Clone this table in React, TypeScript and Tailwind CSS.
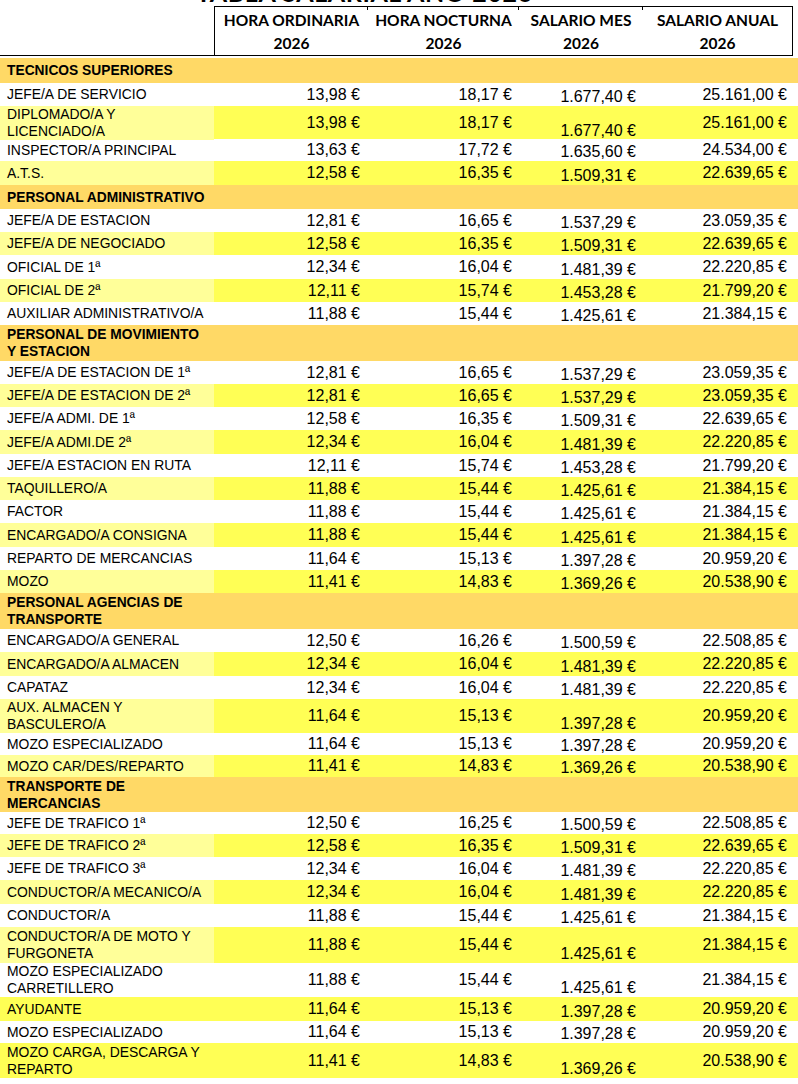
type Row =
  | { kind: "section"; label: string; h: string }
  | {
      kind: "data";
      label: string;
      v: [string, string, string, string];
      fill: "white" | "yellow" | "full";
      h: string;
    };

const rows: Row[] = [
  { kind: "section", label: "TECNICOS SUPERIORES", h: "h-[25px]" },
  { kind: "data", label: "JEFE/A DE SERVICIO", v: ["13,98", "18,17", "1.677,40", "25.161,00"], fill: "white", h: "h-[23px]" },
  { kind: "data", label: "DIPLOMADO/A Y\nLICENCIADO/A", v: ["13,98", "18,17", "1.677,40", "25.161,00"], fill: "yellow", h: "h-[33px]" },
  { kind: "data", label: "INSPECTOR/A PRINCIPAL", v: ["13,63", "17,72", "1.635,60", "24.534,00"], fill: "white", h: "h-[22px]" },
  { kind: "data", label: "A.T.S.", v: ["12,58", "16,35", "1.509,31", "22.639,65"], fill: "yellow", h: "h-[24px]" },
  { kind: "section", label: "PERSONAL ADMINISTRATIVO", h: "h-[24px]" },
  { kind: "data", label: "JEFE/A DE ESTACION", v: ["12,81", "16,65", "1.537,29", "23.059,35"], fill: "white", h: "h-[23px]" },
  { kind: "data", label: "JEFE/A DE NEGOCIADO", v: ["12,58", "16,35", "1.509,31", "22.639,65"], fill: "yellow", h: "h-[23px]" },
  { kind: "data", label: "OFICIAL DE 1ª", v: ["12,34", "16,04", "1.481,39", "22.220,85"], fill: "white", h: "h-[24px]" },
  { kind: "data", label: "OFICIAL DE 2ª", v: ["12,11", "15,74", "1.453,28", "21.799,20"], fill: "yellow", h: "h-[23px]" },
  { kind: "data", label: "AUXILIAR ADMINISTRATIVO/A", v: ["11,88", "15,44", "1.425,61", "21.384,15"], fill: "white", h: "h-[23px]" },
  { kind: "section", label: "PERSONAL DE MOVIMIENTO\nY ESTACION", h: "h-[36px]" },
  { kind: "data", label: "JEFE/A DE ESTACION DE 1ª", v: ["12,81", "16,65", "1.537,29", "23.059,35"], fill: "white", h: "h-[23px]" },
  { kind: "data", label: "JEFE/A DE ESTACION DE 2ª", v: ["12,81", "16,65", "1.537,29", "23.059,35"], fill: "yellow", h: "h-[23px]" },
  { kind: "data", label: "JEFE/A ADMI. DE 1ª", v: ["12,58", "16,35", "1.509,31", "22.639,65"], fill: "white", h: "h-[23px]" },
  { kind: "data", label: "JEFE/A ADMI.DE 2ª", v: ["12,34", "16,04", "1.481,39", "22.220,85"], fill: "yellow", h: "h-[24px]" },
  { kind: "data", label: "JEFE/A ESTACION EN RUTA", v: ["12,11", "15,74", "1.453,28", "21.799,20"], fill: "white", h: "h-[23px]" },
  { kind: "data", label: "TAQUILLERO/A", v: ["11,88", "15,44", "1.425,61", "21.384,15"], fill: "yellow", h: "h-[23px]" },
  { kind: "data", label: "FACTOR", v: ["11,88", "15,44", "1.425,61", "21.384,15"], fill: "white", h: "h-[23px]" },
  { kind: "data", label: "ENCARGADO/A CONSIGNA", v: ["11,88", "15,44", "1.425,61", "21.384,15"], fill: "yellow", h: "h-[24px]" },
  { kind: "data", label: "REPARTO DE MERCANCIAS", v: ["11,64", "15,13", "1.397,28", "20.959,20"], fill: "white", h: "h-[23px]" },
  { kind: "data", label: "MOZO", v: ["11,41", "14,83", "1.369,26", "20.538,90"], fill: "yellow", h: "h-[23px]" },
  { kind: "section", label: "PERSONAL AGENCIAS DE\nTRANSPORTE", h: "h-[36px]" },
  { kind: "data", label: "ENCARGADO/A GENERAL", v: ["12,50", "16,26", "1.500,59", "22.508,85"], fill: "white", h: "h-[23px]" },
  { kind: "data", label: "ENCARGADO/A ALMACEN", v: ["12,34", "16,04", "1.481,39", "22.220,85"], fill: "yellow", h: "h-[24px]" },
  { kind: "data", label: "CAPATAZ", v: ["12,34", "16,04", "1.481,39", "22.220,85"], fill: "white", h: "h-[23px]" },
  { kind: "data", label: "AUX. ALMACEN Y\nBASCULERO/A", v: ["11,64", "15,13", "1.397,28", "20.959,20"], fill: "yellow", h: "h-[34px]" },
  { kind: "data", label: "MOZO ESPECIALIZADO", v: ["11,64", "15,13", "1.397,28", "20.959,20"], fill: "white", h: "h-[22px]" },
  { kind: "data", label: "MOZO CAR/DES/REPARTO", v: ["11,41", "14,83", "1.369,26", "20.538,90"], fill: "yellow", h: "h-[22px]" },
  { kind: "section", label: "TRANSPORTE DE\nMERCANCIAS", h: "h-[35px]" },
  { kind: "data", label: "JEFE DE TRAFICO 1ª", v: ["12,50", "16,25", "1.500,59", "22.508,85"], fill: "white", h: "h-[22px]" },
  { kind: "data", label: "JEFE DE TRAFICO 2ª", v: ["12,58", "16,35", "1.509,31", "22.639,65"], fill: "yellow", h: "h-[23px]" },
  { kind: "data", label: "JEFE DE TRAFICO 3ª", v: ["12,34", "16,04", "1.481,39", "22.220,85"], fill: "white", h: "h-[23px]" },
  { kind: "data", label: "CONDUCTOR/A MECANICO/A", v: ["12,34", "16,04", "1.481,39", "22.220,85"], fill: "yellow", h: "h-[24px]" },
  { kind: "data", label: "CONDUCTOR/A", v: ["11,88", "15,44", "1.425,61", "21.384,15"], fill: "white", h: "h-[23px]" },
  { kind: "data", label: "CONDUCTOR/A DE MOTO Y\nFURGONETA", v: ["11,88", "15,44", "1.425,61", "21.384,15"], fill: "yellow", h: "h-[36px]" },
  { kind: "data", label: "MOZO ESPECIALIZADO\nCARRETILLERO", v: ["11,88", "15,44", "1.425,61", "21.384,15"], fill: "white", h: "h-[34px]" },
  { kind: "data", label: "AYUDANTE", v: ["11,64", "15,13", "1.397,28", "20.959,20"], fill: "full", h: "h-[24px]" },
  { kind: "data", label: "MOZO ESPECIALIZADO", v: ["11,64", "15,13", "1.397,28", "20.959,20"], fill: "white", h: "h-[22px]" },
  { kind: "data", label: "MOZO CARGA, DESCARGA Y\nREPARTO", v: ["11,41", "14,83", "1.369,26", "20.538,90"], fill: "full", h: "h-[35px]" },
];

const cols = "grid grid-cols-[214px_153px_151px_124px_150px_6px]";

const HeaderCell = ({ title, tick }: { title: string; tick?: boolean }) => (
  <div className="relative flex flex-col items-center pt-[2px] leading-[23px]">
    {tick && <div className="absolute left-[-1px] top-0 h-[3px] w-px bg-black" />}
    <span>{title}</span>
    <span>2026</span>
  </div>
);

export default function App() {
  return (
    <div className="flex h-[1084px] w-[798px] flex-col overflow-hidden bg-white text-black">
      {/* title, mostly scrolled off the top */}
      <div className="h-[6px] shrink-0 overflow-hidden">
        <div className="-mt-[20.5px] pl-[196px] font-['Lato',sans-serif] text-[25px] font-bold leading-[24px] tracking-[0.6px]">
          TABLA SALARIAL AÑO 2026
        </div>
      </div>

      {/* column headings */}
      <div className="flex w-[793px] shrink-0 border-b border-black">
        <div className="w-[214px]" />
        <div className="grid h-[49px] flex-1 grid-cols-[153px_151px_124px_1fr] border-l border-r border-t border-black font-['Lato',sans-serif] text-[15.5px] font-bold">
          <HeaderCell title="HORA ORDINARIA" />
          <HeaderCell title="HORA NOCTURNA" tick />
          <HeaderCell title="SALARIO MES" tick />
          <HeaderCell title="SALARIO ANUAL" tick />
        </div>
      </div>
      <div className="h-[2px] shrink-0" />

      <div className="font-['Liberation_Sans',Arial,sans-serif]">
        {rows.map((r, i) =>
          r.kind === "section" ? (
            <div key={i} className={`flex items-center bg-[#ffd966] pl-[7px] text-[13.8px] font-bold leading-[17px] whitespace-pre-line ${r.h}`}>
              {r.label}
            </div>
          ) : (
            <div
              key={i}
              className={`${cols} ${r.h} ${r.fill === "white" ? "bg-white" : "bg-[#ffff55]"}`}
            >
              <div
                className={`flex items-center pl-[7px] text-[13.9px] leading-[17px] whitespace-pre-line ${
                  r.fill === "yellow" ? "bg-[#ffff99]" : ""
                }`}
              >
                {r.label}
              </div>
              <div className="flex items-center justify-end pr-[7px] text-[16px] leading-[18px]">{r.v[0]} €</div>
              <div className="flex items-center justify-end pr-[6px] text-[16px] leading-[18px]">{r.v[1]} €</div>
              <div className="flex items-end justify-end pr-[6px] text-[16px] leading-[18px]">{r.v[2]} €</div>
              <div className="flex items-center justify-end pr-[5px] text-[16px] leading-[18px]">{r.v[3]} €</div>
              <div />
            </div>
          )
        )}
      </div>
    </div>
  );
}
